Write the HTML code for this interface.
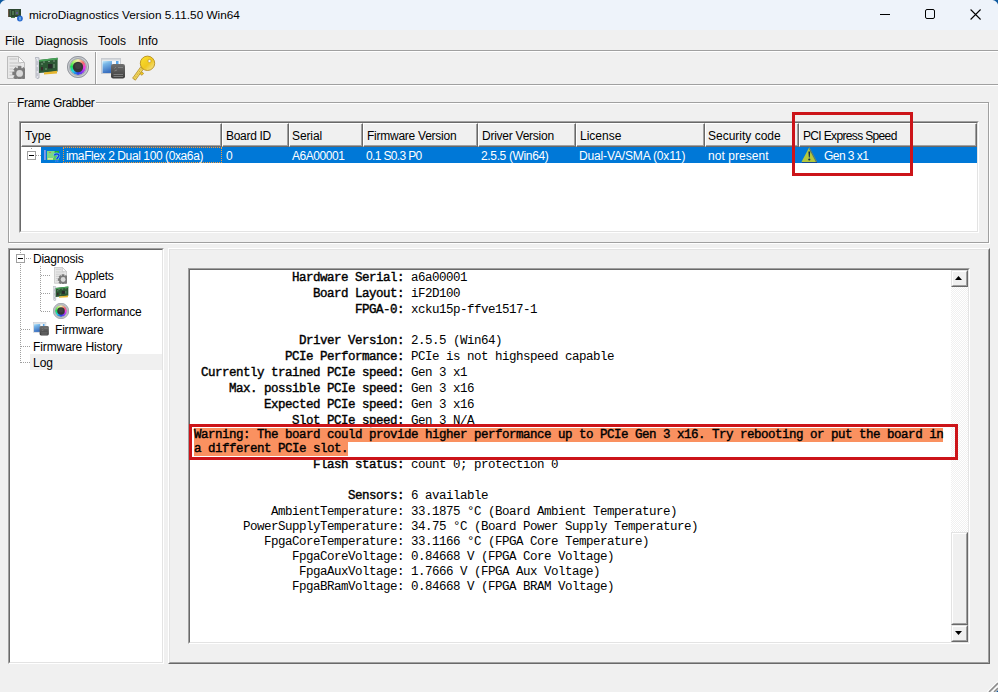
<!DOCTYPE html>
<html><head><meta charset="utf-8"><style>
*{margin:0;padding:0;box-sizing:border-box}
html,body{width:998px;height:692px;overflow:hidden;background:#f0f0f0;font-family:"Liberation Sans",sans-serif;color:#000}
.a{position:absolute}
.u{position:absolute;font-size:12px;line-height:14px;white-space:nowrap}
.m{position:absolute;font-family:"Liberation Mono",monospace;font-size:12.5px;letter-spacing:-0.5px;line-height:14px;white-space:pre;color:#000;left:0}
.b{-webkit-text-stroke:0.4px #000}
.hd{position:absolute;background:#f0f0f0;border-style:solid;border-width:1px 1px 1px 1px;border-color:#fff #a0a0a0 #a0a0a0 #fff;box-shadow:1px 1px 0 #696969}
.dot{position:absolute;background-image:linear-gradient(90deg,#a0a0a0 50%,transparent 50%);background-size:2px 1px;height:1px}
.vdot{position:absolute;background-image:linear-gradient(180deg,#a0a0a0 50%,transparent 50%);background-size:1px 2px;width:1px}
</style></head><body>
<div class="a" style="left:0px;top:0px;width:998px;height:30px;background:#eef3fa"></div>
<svg class="a" style="left:0;top:0" width="6" height="5" viewBox="0 0 6 5"><path d="M0 0H5.5Q1.5 0.8 0 4.5Z" fill="#0f5aa0"/></svg>
<svg class="a" style="left:992px;top:0" width="6" height="5" viewBox="0 0 6 5"><path d="M6 0H0.5Q4.5 0.8 6 4.5Z" fill="#0f5aa0"/></svg>
<svg class="a" style="left:8px;top:8px" width="16" height="14" viewBox="0 0 16 14">
<rect x="0" y="1" width="13" height="8" fill="#2c4630"/>
<rect x="0" y="1" width="1.2" height="8" fill="#6a5a4a"/>
<rect x="2" y="2" width="1" height="6" fill="#4a6e4c"/>
<rect x="4" y="3" width="2" height="4" fill="#4e7650"/>
<rect x="7" y="2" width="4" height="5" fill="#43664a"/>
<rect x="8" y="4" width="2" height="2" fill="#5a5a8a"/>
<rect x="3" y="9" width="4" height="1" fill="#4a7a4a"/>
<circle cx="11.9" cy="10.5" r="2.9" fill="#2a6ad0"/>
<rect x="11.5" y="9" width="1" height="3.2" fill="#a0e8f0"/>
</svg>
<div class="u" style="left:29px;top:6px;font-size:11.8px;line-height:18px;">microDiagnostics Version 5.11.50 Win64</div>
<div class="a" style="left:880px;top:14px;width:10px;height:1px;background:#000"></div>
<div class="a" style="left:925px;top:9px;width:10px;height:10px;border:1px solid #000;border-radius:2px"></div>
<svg class="a" style="left:970px;top:9px" width="12" height="11" viewBox="0 0 12 11"><path d="M0.6 0.5L10.6 10.5M10.6 0.5L0.6 10.5" stroke="#000" stroke-width="1.1"/></svg>
<div class="u" style="left:5px;top:34px;font-size:12px;">File</div>
<div class="u" style="left:35px;top:34px;font-size:12px;">Diagnosis</div>
<div class="u" style="left:98px;top:34px;font-size:12px;">Tools</div>
<div class="u" style="left:138px;top:34px;font-size:12px;">Info</div>
<div class="a" style="left:0px;top:50px;width:998px;height:1px;background:#a0a0a0"></div>
<div class="a" style="left:0px;top:51px;width:998px;height:1px;background:#fff"></div>
<svg class="a" style="left:7px;top:56px" width="18.0" height="23.0" viewBox="0 0 18 23">
<path d="M0.5 0.5H11.5L17.5 6.5V22.5H0.5Z" fill="#e8e8e8" stroke="#bcbcbc"/>
<path d="M11.5 0.5V6.5H17.5Z" fill="#fafafa" stroke="#c0c0c0"/>
<path d="M2.5 3H10M2.5 7H14M2.5 10H14M2.5 13H6M2.5 16H5M2.5 19H5" stroke="#d0d0d0" stroke-width="1.4"/>
<g transform="translate(12.6,17.4)" fill="#7a7a7a">
<circle r="5.6"/>
<rect x="-1.8" y="-7.3" width="3.6" height="14.6"/>
<rect x="-7.3" y="-1.8" width="14.6" height="3.6"/>
<rect x="-1.8" y="-7.3" width="3.6" height="14.6" transform="rotate(45)"/>
<rect x="-1.8" y="-7.3" width="3.6" height="14.6" transform="rotate(-45)"/>
<circle r="3.4" fill="#d8d8d8"/>
</g></svg>
<svg class="a" style="left:35px;top:57px" width="23.0" height="22.0" viewBox="0 0 23 22">
<path d="M0.3 0.3L4 0.8V21L2 21.6L1 20.5V2L0.3 1.5Z" fill="#e2e4ea" stroke="#9ea2ae" stroke-width="0.7"/>
<path d="M2.2 4V8M2.2 10V14M2.2 16V19" stroke="#a8acb6" stroke-width="0.8"/>
<path d="M4 3L22.6 0.8V14.4L4 16Z" fill="#2c5834"/>
<path d="M4 3L22.6 0.8V2.6L4 4.8Z" fill="#48a458"/>
<path d="M9 15.5L22 13.8V16.6L9 17.4Z" fill="#e6b62e"/>
<rect x="13" y="7" width="4.5" height="4.5" fill="#262a28"/>
<rect x="6" y="10" width="2" height="3.5" fill="#3a2a2a"/>
<path d="M8 5H10M13 4.5H15M18 4H20M19 7V11M6 7H8M10 12H12" stroke="#8aa890" stroke-width="0.9"/>
</svg>
<div class="a" style="left:69.64px;top:58.64px;width:16.72px;height:16.72px;border-radius:50%;background:conic-gradient(#f6f2b0,#f46a6a 50deg,#f040e8 95deg,#8a3af0 140deg,#2a40f0 180deg,#20d8e0 230deg,#20e050 275deg,#b0f070 320deg,#f6f2b0)"></div>
<svg class="a" style="left:67px;top:56px" width="22" height="22" viewBox="0 0 22 22">
<circle cx="11" cy="11" r="9.6" fill="none" stroke="#c6cacf" stroke-width="2.6"/>
<circle cx="11" cy="11" r="10.6" fill="none" stroke="#8e9298" stroke-width="0.9"/>
<circle cx="11" cy="11" r="8.4" fill="none" stroke="#90949a" stroke-width="0.8"/>
<circle cx="11" cy="11" r="5.2" fill="#353535"/>
<circle cx="11" cy="10" r="3" fill="#4a4a4a" opacity="0.6"/>
</svg>
<div class="a" style="left:95px;top:52px;width:1px;height:32px;background:#a0a0a0"></div>
<div class="a" style="left:96px;top:52px;width:1px;height:32px;background:#fff"></div>
<svg class="a" style="left:101px;top:58px" width="25.0" height="21.0" viewBox="0 0 25 21">
<defs><linearGradient id="fwg10158" x1="0" y1="0" x2="0.3" y2="1"><stop offset="0" stop-color="#c8ecfa"/><stop offset="0.3" stop-color="#7ab8e8"/><stop offset="1" stop-color="#3a70c0"/></linearGradient>
<linearGradient id="fwc10158" x1="0" y1="0" x2="0" y2="1"><stop offset="0" stop-color="#707070"/><stop offset="1" stop-color="#3c3c3c"/></linearGradient></defs>
<rect x="0.5" y="0.5" width="19" height="15" fill="#f6f8fa" stroke="#c8ccd2"/>
<rect x="1" y="1" width="18" height="1.5" fill="#d4d8dc"/>
<rect x="1.5" y="3" width="9.5" height="12" fill="url(#fwg10158)"/>
<rect x="15" y="3" width="2.5" height="5" fill="#5aa6e8"/>
<rect x="10" y="6" width="14" height="14.5" rx="2.2" fill="url(#fwc10158)"/>
<path d="M13.5 10.5L15 9M13.5 13L16 12M17 9.5H22M12.5 16.5H22M12.5 18.5H22" stroke="#8a8a8a" stroke-width="0.8"/>
</svg>
<svg class="a" style="left:132px;top:55px" width="24.0" height="26.0" viewBox="0 0 24 26">
<defs><linearGradient id="kg" x1="0" y1="0" x2="1" y2="1"><stop offset="0" stop-color="#fbe230"/><stop offset="0.55" stop-color="#f0c820"/><stop offset="1" stop-color="#f4e8a8"/></linearGradient></defs>
<path d="M11.6 13.8L3.4 25.2L0.6 23.2L8.8 11.8Z" fill="#f2d860" stroke="#b08a28" stroke-width="0.8"/>
<path d="M2.6 23.4L10 13" stroke="#c09a30" stroke-width="0.9" stroke-dasharray="1 1"/>
<path d="M9.6 16.8L11.6 18.3L10 20.3L8 18.8Z" fill="#f0c820" stroke="#b08a28" stroke-width="0.7"/>
<circle cx="15.5" cy="8.3" r="7.2" fill="url(#kg)" stroke="#b89020" stroke-width="0.9"/>
<circle cx="17.5" cy="6" r="1.6" fill="#f6f6f6" stroke="#b89020" stroke-width="0.6"/>
</svg>
<div class="a" style="left:0px;top:84px;width:998px;height:1px;background:#a0a0a0"></div>
<div class="a" style="left:0px;top:85px;width:998px;height:1px;background:#fff"></div>
<div class="a" style="left:9px;top:103px;width:981px;height:141px;border:1px solid #fff"></div>
<div class="a" style="left:8px;top:102px;width:981px;height:141px;border:1px solid #a0a0a0"></div>
<div class="a" style="left:16px;top:96px;width:80px;height:14px;background:#f0f0f0"></div>
<div class="u" style="left:17px;top:96px;font-size:12px;letter-spacing:-0.35px;">Frame Grabber</div>
<div class="a" style="left:19px;top:121px;width:960px;height:112px;background:#fff;border-style:solid;border-width:1px;border-color:#a0a0a0 #fff #fff #a0a0a0"></div>
<div class="a" style="left:20px;top:122px;width:958px;height:110px;border-style:solid;border-width:1px;border-color:#696969 #e3e3e3 #e3e3e3 #696969"></div>
<div class="a" style="left:21px;top:123px;width:201px;height:24px;background:#f0f0f0;border-style:solid;border-width:1px;border-color:#fff #696969 #696969 #fff"></div>
<div class="a" style="left:22px;top:124px;width:199px;height:22px;border-style:solid;border-width:0 1px 1px 0;border-color:#a0a0a0"></div>
<div class="u" style="left:25px;top:129px;font-size:12px;">Type</div>
<div class="a" style="left:222px;top:123px;width:67px;height:24px;background:#f0f0f0;border-style:solid;border-width:1px;border-color:#fff #696969 #696969 #fff"></div>
<div class="a" style="left:223px;top:124px;width:65px;height:22px;border-style:solid;border-width:0 1px 1px 0;border-color:#a0a0a0"></div>
<div class="u" style="left:226px;top:129px;font-size:12px;letter-spacing:-0.3px;">Board ID</div>
<div class="a" style="left:289px;top:123px;width:74px;height:24px;background:#f0f0f0;border-style:solid;border-width:1px;border-color:#fff #696969 #696969 #fff"></div>
<div class="a" style="left:290px;top:124px;width:72px;height:22px;border-style:solid;border-width:0 1px 1px 0;border-color:#a0a0a0"></div>
<div class="u" style="left:292px;top:129px;font-size:12px;letter-spacing:-0.1px;">Serial</div>
<div class="a" style="left:363px;top:123px;width:115px;height:24px;background:#f0f0f0;border-style:solid;border-width:1px;border-color:#fff #696969 #696969 #fff"></div>
<div class="a" style="left:364px;top:124px;width:113px;height:22px;border-style:solid;border-width:0 1px 1px 0;border-color:#a0a0a0"></div>
<div class="u" style="left:367px;top:129px;font-size:12px;letter-spacing:-0.25px;">Firmware Version</div>
<div class="a" style="left:478px;top:123px;width:98px;height:24px;background:#f0f0f0;border-style:solid;border-width:1px;border-color:#fff #696969 #696969 #fff"></div>
<div class="a" style="left:479px;top:124px;width:96px;height:22px;border-style:solid;border-width:0 1px 1px 0;border-color:#a0a0a0"></div>
<div class="u" style="left:482px;top:129px;font-size:12px;letter-spacing:-0.25px;">Driver Version</div>
<div class="a" style="left:576px;top:123px;width:129px;height:24px;background:#f0f0f0;border-style:solid;border-width:1px;border-color:#fff #696969 #696969 #fff"></div>
<div class="a" style="left:577px;top:124px;width:127px;height:22px;border-style:solid;border-width:0 1px 1px 0;border-color:#a0a0a0"></div>
<div class="u" style="left:580px;top:129px;font-size:12px;">License</div>
<div class="a" style="left:705px;top:123px;width:94px;height:24px;background:#f0f0f0;border-style:solid;border-width:1px;border-color:#fff #696969 #696969 #fff"></div>
<div class="a" style="left:706px;top:124px;width:92px;height:22px;border-style:solid;border-width:0 1px 1px 0;border-color:#a0a0a0"></div>
<div class="u" style="left:708px;top:129px;font-size:12px;">Security code</div>
<div class="a" style="left:799px;top:123px;width:178px;height:24px;background:#f0f0f0;border-style:solid;border-width:1px;border-color:#fff #696969 #696969 #fff"></div>
<div class="a" style="left:800px;top:124px;width:176px;height:22px;border-style:solid;border-width:0 1px 1px 0;border-color:#a0a0a0"></div>
<div class="u" style="left:803px;top:129px;font-size:12px;letter-spacing:-0.65px;">PCI Express Speed</div>
<div class="a" style="left:41px;top:147px;width:936px;height:16px;background:#0078d7"></div>
<div class="a" style="left:27px;top:151px;width:9px;height:9px;border:1px solid #a0a0a0;background:#fff"></div>
<div class="a" style="left:29px;top:155px;width:5px;height:1px;background:#000"></div>
<div class="dot" style="left:36px;top:155px;width:5px"></div>
<div class="a" style="left:31px;top:148px;width:1px;height:1px;background:#a0a0a0"></div>
<svg class="a" style="left:43px;top:147px" width="17" height="16" viewBox="0 0 17 16">
<rect x="1" y="3" width="1.8" height="10" fill="#8898e8"/>
<rect x="4" y="4" width="12" height="9" fill="#58c864"/>
<rect x="4" y="4" width="7" height="7" fill="#7ad884"/>
<rect x="12" y="4" width="4" height="3" fill="#22b030"/>
<rect x="4.5" y="11" width="5.5" height="1.8" fill="#d0ec98"/>
<rect x="6" y="5" width="2" height="1" fill="#c08060"/>
<path d="M11.6 8.6C11.6 6.3 16 6.3 16 8.6C16 10.1 13.9 10.5 13.9 12.2M13.9 13.6V14.8" fill="none" stroke="#70c0ff" stroke-width="2.6"/><path d="M11.6 8.6C11.6 6.3 16 6.3 16 8.6C16 10.1 13.9 10.5 13.9 12.2M13.9 13.6V14.8" fill="none" stroke="#1048d8" stroke-width="1.5"/>
</svg>
<div class="a" style="left:63px;top:147px;width:159px;height:16px;border:1px dotted #f59a3a"></div>
<div class="u" style="left:66px;top:149px;font-size:12px;letter-spacing:-0.4px;color:#fff;">imaFlex 2 Dual 100 (0xa6a)</div>
<div class="u" style="left:226px;top:149px;font-size:12px;color:#fff;">0</div>
<div class="u" style="left:292px;top:149px;font-size:12px;letter-spacing:-0.45px;color:#fff;">A6A00001</div>
<div class="u" style="left:366px;top:149px;font-size:12px;letter-spacing:-0.65px;color:#fff;">0.1 S0.3 P0</div>
<div class="u" style="left:481px;top:149px;font-size:12px;letter-spacing:-0.35px;color:#fff;">2.5.5 (Win64)</div>
<div class="u" style="left:579px;top:149px;font-size:12px;letter-spacing:-0.15px;color:#fff;">Dual-VA/SMA (0x11)</div>
<div class="u" style="left:708px;top:149px;font-size:12px;letter-spacing:0.05px;color:#fff;">not present</div>
<div class="u" style="left:824px;top:149px;font-size:12px;letter-spacing:-0.55px;color:#fff;">Gen 3 x1</div>
<svg class="a" style="left:801px;top:147px" width="17" height="16" viewBox="0 0 17 16">
<path d="M8.3 0.3L15.9 14.6Q16.1 15.2 15.4 15.2H1.2Q0.5 15.2 0.7 14.6Z" fill="#b4c83c"/>
<path d="M8.3 0.3L16.2 15.2H15L8.3 2.5Z" fill="#1a3c8c" opacity="0.6"/>
<rect x="1" y="15" width="15" height="1" fill="#123a8a" opacity="0.8"/>
<path d="M7.4 4.5H9.2L8.7 10.5H7.9Z" fill="#0c2850"/>
<circle cx="8.3" cy="12.5" r="1.1" fill="#0c2850"/>
</svg>
<div class="a" style="left:8px;top:248px;width:156px;height:416px;background:#fff;border-style:solid;border-width:1px;border-color:#a0a0a0 #fff #fff #a0a0a0"></div>
<div class="a" style="left:9px;top:249px;width:154px;height:414px;border-style:solid;border-width:1px;border-color:#696969 #e3e3e3 #e3e3e3 #696969"></div>
<div class="a" style="left:16px;top:254px;width:9px;height:9px;border:1px solid #a0a0a0;background:#fff"></div>
<div class="a" style="left:18px;top:258px;width:5px;height:1px;background:#000"></div>
<div class="vdot" style="left:20px;top:250px;height:4px"></div>
<div class="dot" style="left:26px;top:258px;width:5px"></div>
<div class="vdot" style="left:20px;top:264px;height:99px"></div>
<div class="dot" style="left:21px;top:329px;width:10px"></div>
<div class="dot" style="left:21px;top:346px;width:10px"></div>
<div class="dot" style="left:21px;top:362px;width:10px"></div>
<div class="vdot" style="left:40px;top:266px;height:46px"></div>
<div class="dot" style="left:41px;top:275px;width:10px"></div>
<div class="dot" style="left:41px;top:293px;width:10px"></div>
<div class="dot" style="left:41px;top:311px;width:10px"></div>
<div class="u" style="left:33px;top:252px;font-size:12px;letter-spacing:-0.25px;">Diagnosis</div>
<svg class="a" style="left:54px;top:267px" width="13.0" height="16.6" viewBox="0 0 18 23">
<path d="M0.5 0.5H11.5L17.5 6.5V22.5H0.5Z" fill="#e8e8e8" stroke="#bcbcbc"/>
<path d="M11.5 0.5V6.5H17.5Z" fill="#fafafa" stroke="#c0c0c0"/>
<path d="M2.5 3H10M2.5 7H14M2.5 10H14M2.5 13H6M2.5 16H5M2.5 19H5" stroke="#d0d0d0" stroke-width="1.4"/>
<g transform="translate(12.6,17.4)" fill="#7a7a7a">
<circle r="5.6"/>
<rect x="-1.8" y="-7.3" width="3.6" height="14.6"/>
<rect x="-7.3" y="-1.8" width="14.6" height="3.6"/>
<rect x="-1.8" y="-7.3" width="3.6" height="14.6" transform="rotate(45)"/>
<rect x="-1.8" y="-7.3" width="3.6" height="14.6" transform="rotate(-45)"/>
<circle r="3.4" fill="#d8d8d8"/>
</g></svg>
<div class="u" style="left:75px;top:269px;font-size:12px;letter-spacing:-0.2px;">Applets</div>
<svg class="a" style="left:53px;top:286px" width="15.6" height="15.0" viewBox="0 0 23 22">
<path d="M0.3 0.3L4 0.8V21L2 21.6L1 20.5V2L0.3 1.5Z" fill="#e2e4ea" stroke="#9ea2ae" stroke-width="0.7"/>
<path d="M2.2 4V8M2.2 10V14M2.2 16V19" stroke="#a8acb6" stroke-width="0.8"/>
<path d="M4 3L22.6 0.8V14.4L4 16Z" fill="#2c5834"/>
<path d="M4 3L22.6 0.8V2.6L4 4.8Z" fill="#48a458"/>
<path d="M9 15.5L22 13.8V16.6L9 17.4Z" fill="#e6b62e"/>
<rect x="13" y="7" width="4.5" height="4.5" fill="#262a28"/>
<rect x="6" y="10" width="2" height="3.5" fill="#3a2a2a"/>
<path d="M8 5H10M13 4.5H15M18 4H20M19 7V11M6 7H8M10 12H12" stroke="#8aa890" stroke-width="0.9"/>
</svg>
<div class="u" style="left:75px;top:287px;font-size:12px;letter-spacing:-0.2px;">Board</div>
<div class="a" style="left:54.92px;top:304.92px;width:12.16px;height:12.16px;border-radius:50%;background:conic-gradient(#f6f2b0,#f46a6a 50deg,#f040e8 95deg,#8a3af0 140deg,#2a40f0 180deg,#20d8e0 230deg,#20e050 275deg,#b0f070 320deg,#f6f2b0)"></div>
<svg class="a" style="left:53px;top:303px" width="16" height="16" viewBox="0 0 22 22">
<circle cx="11" cy="11" r="9.6" fill="none" stroke="#c6cacf" stroke-width="2.6"/>
<circle cx="11" cy="11" r="10.6" fill="none" stroke="#8e9298" stroke-width="0.9"/>
<circle cx="11" cy="11" r="8.4" fill="none" stroke="#90949a" stroke-width="0.8"/>
<circle cx="11" cy="11" r="5.2" fill="#353535"/>
<circle cx="11" cy="10" r="3" fill="#4a4a4a" opacity="0.6"/>
</svg>
<div class="u" style="left:75px;top:305px;font-size:12px;letter-spacing:-0.2px;">Performance</div>
<svg class="a" style="left:33px;top:322px" width="16.5" height="13.9" viewBox="0 0 25 21">
<defs><linearGradient id="fwg33322" x1="0" y1="0" x2="0.3" y2="1"><stop offset="0" stop-color="#c8ecfa"/><stop offset="0.3" stop-color="#7ab8e8"/><stop offset="1" stop-color="#3a70c0"/></linearGradient>
<linearGradient id="fwc33322" x1="0" y1="0" x2="0" y2="1"><stop offset="0" stop-color="#707070"/><stop offset="1" stop-color="#3c3c3c"/></linearGradient></defs>
<rect x="0.5" y="0.5" width="19" height="15" fill="#f6f8fa" stroke="#c8ccd2"/>
<rect x="1" y="1" width="18" height="1.5" fill="#d4d8dc"/>
<rect x="1.5" y="3" width="9.5" height="12" fill="url(#fwg33322)"/>
<rect x="15" y="3" width="2.5" height="5" fill="#5aa6e8"/>
<rect x="10" y="6" width="14" height="14.5" rx="2.2" fill="url(#fwc33322)"/>
<path d="M13.5 10.5L15 9M13.5 13L16 12M17 9.5H22M12.5 16.5H22M12.5 18.5H22" stroke="#8a8a8a" stroke-width="0.8"/>
</svg>
<div class="u" style="left:55px;top:323px;font-size:12px;letter-spacing:-0.2px;">Firmware</div>
<div class="u" style="left:33px;top:340px;font-size:12px;letter-spacing:-0.1px;">Firmware History</div>
<div class="a" style="left:30px;top:354px;width:132px;height:16px;background:#f0f0f0"></div>
<div class="u" style="left:33px;top:356px;font-size:12px;">Log</div>
<div class="a" style="left:168px;top:248px;width:822px;height:416px;background:#f0f0f0;border-style:solid;border-width:1px;border-color:#fff #696969 #696969 #fff"></div>
<div class="a" style="left:169px;top:249px;width:820px;height:414px;border-style:solid;border-width:1px;border-color:#e3e3e3 #a0a0a0 #a0a0a0 #e3e3e3"></div>
<div class="a" style="left:188px;top:268px;width:782px;height:376px;background:#fff;border-style:solid;border-width:1px;border-color:#a0a0a0 #fff #fff #a0a0a0"></div>
<div class="a" style="left:189px;top:269px;width:780px;height:374px;border-style:solid;border-width:1px;border-color:#696969 #e3e3e3 #e3e3e3 #696969"></div>
<div class="a" style="left:190px;top:270px;width:761px;height:372px;overflow:hidden">
<div class="m" style="top:1px;left:102px"><span class="b">Hardware Serial:</span> a6a00001</div>
<div class="m" style="top:17px;left:123px"><span class="b">Board Layout:</span> iF2D100</div>
<div class="m" style="top:33px;left:165px"><span class="b">FPGA-0:</span> xcku15p-ffve1517-1</div>
<div class="m" style="top:64px;left:109px"><span class="b">Driver Version:</span> 2.5.5 (Win64)</div>
<div class="m" style="top:80px;left:95px"><span class="b">PCIe Performance:</span> PCIe is not highspeed capable</div>
<div class="m" style="top:96px;left:11px"><span class="b">Currently trained PCIe speed:</span> Gen 3 x1</div>
<div class="m" style="top:112px;left:39px"><span class="b">Max. possible PCIe speed:</span> Gen 3 x16</div>
<div class="m" style="top:128px;left:74px"><span class="b">Expected PCIe speed:</span> Gen 3 x16</div>
<div class="m" style="top:144px;left:102px"><span class="b">Slot PCIe speed:</span> Gen 3 N/A</div>
<div class="m" style="top:188px;left:123px"><span class="b">Flash status:</span> count 0; protection 0</div>
<div class="m" style="top:219px;left:158px"><span class="b">Sensors:</span> 6 available</div>
<div class="m" style="top:235px;left:81px"><span class="">AmbientTemperature:</span> 33.1875 °C (Board Ambient Temperature)</div>
<div class="m" style="top:250px;left:53px"><span class="">PowerSupplyTemperature:</span> 34.75 °C (Board Power Supply Temperature)</div>
<div class="m" style="top:265px;left:74px"><span class="">FpgaCoreTemperature:</span> 33.1166 °C (FPGA Core Temperature)</div>
<div class="m" style="top:280px;left:102px"><span class="">FpgaCoreVoltage:</span> 0.84668 V (FPGA Core Voltage)</div>
<div class="m" style="top:295px;left:109px"><span class="">FpgaAuxVoltage:</span> 1.7666 V (FPGA Aux Voltage)</div>
<div class="m" style="top:310px;left:102px"><span class="">FpgaBRamVoltage:</span> 0.84668 V (FPGA BRAM Voltage)</div>
<div class="a" style="left:4px;top:158px;width:749px;height:14px;background:#fa9160"></div>
<div class="a" style="left:4px;top:172px;width:154px;height:14px;background:#fa9160"></div>
<div class="m b" style="top:158px;left:4px">Warning: The board could provide higher performance up to PCIe Gen 3 x16. Try rebooting or put the board in</div>
<div class="m b" style="top:172px;left:4px">a different PCIe slot.</div>
</div>
<div class="a" style="left:951px;top:287px;width:17px;height:245px;background-color:#fff;background-image:repeating-conic-gradient(#f0f0f0 0 25%,#fff 0 50%);background-size:2px 2px"></div>
<div class="a" style="left:951px;top:270px;width:17px;height:17px;background:#f0f0f0;border-style:solid;border-width:1px;border-color:#e3e3e3 #696969 #696969 #e3e3e3"></div>
<div class="a" style="left:952px;top:271px;width:15px;height:15px;border-style:solid;border-width:1px;border-color:#fff #a0a0a0 #a0a0a0 #fff"></div>
<div class="a" style="left:951px;top:532px;width:17px;height:93px;background:#f0f0f0;border-style:solid;border-width:1px;border-color:#e3e3e3 #696969 #696969 #e3e3e3"></div>
<div class="a" style="left:952px;top:533px;width:15px;height:91px;border-style:solid;border-width:1px;border-color:#fff #a0a0a0 #a0a0a0 #fff"></div>
<div class="a" style="left:951px;top:625px;width:17px;height:17px;background:#f0f0f0;border-style:solid;border-width:1px;border-color:#e3e3e3 #696969 #696969 #e3e3e3"></div>
<div class="a" style="left:952px;top:626px;width:15px;height:15px;border-style:solid;border-width:1px;border-color:#fff #a0a0a0 #a0a0a0 #fff"></div>
<svg class="a" style="left:955px;top:276px" width="7" height="4" viewBox="0 0 7 4"><path d="M3.5 0L7 4H0Z" fill="#000"/></svg>
<svg class="a" style="left:955px;top:631px" width="7" height="4" viewBox="0 0 7 4"><path d="M0 0H7L3.5 4Z" fill="#000"/></svg>
<div class="a" style="left:792px;top:112px;width:121px;height:64px;border:3px solid #cc1419"></div>
<div class="a" style="left:189px;top:424px;width:769px;height:36px;border:3px solid #cc1419"></div>
<svg class="a" style="left:978px;top:672px" width="20" height="20" viewBox="0 0 20 20"><path d="M20 9.5L9.5 20" stroke="#fff" stroke-width="1.2"/><path d="M20 11L11 20" stroke="#8c8c8c" stroke-width="1.6"/><path d="M20 14.5L14.5 20" stroke="#fff" stroke-width="1.2"/><path d="M20 16L16 20" stroke="#8c8c8c" stroke-width="1.6"/><path d="M20 18Q19 19.5 17.8 20H20Z" fill="#1a5a9a"/></svg>
</body></html>
